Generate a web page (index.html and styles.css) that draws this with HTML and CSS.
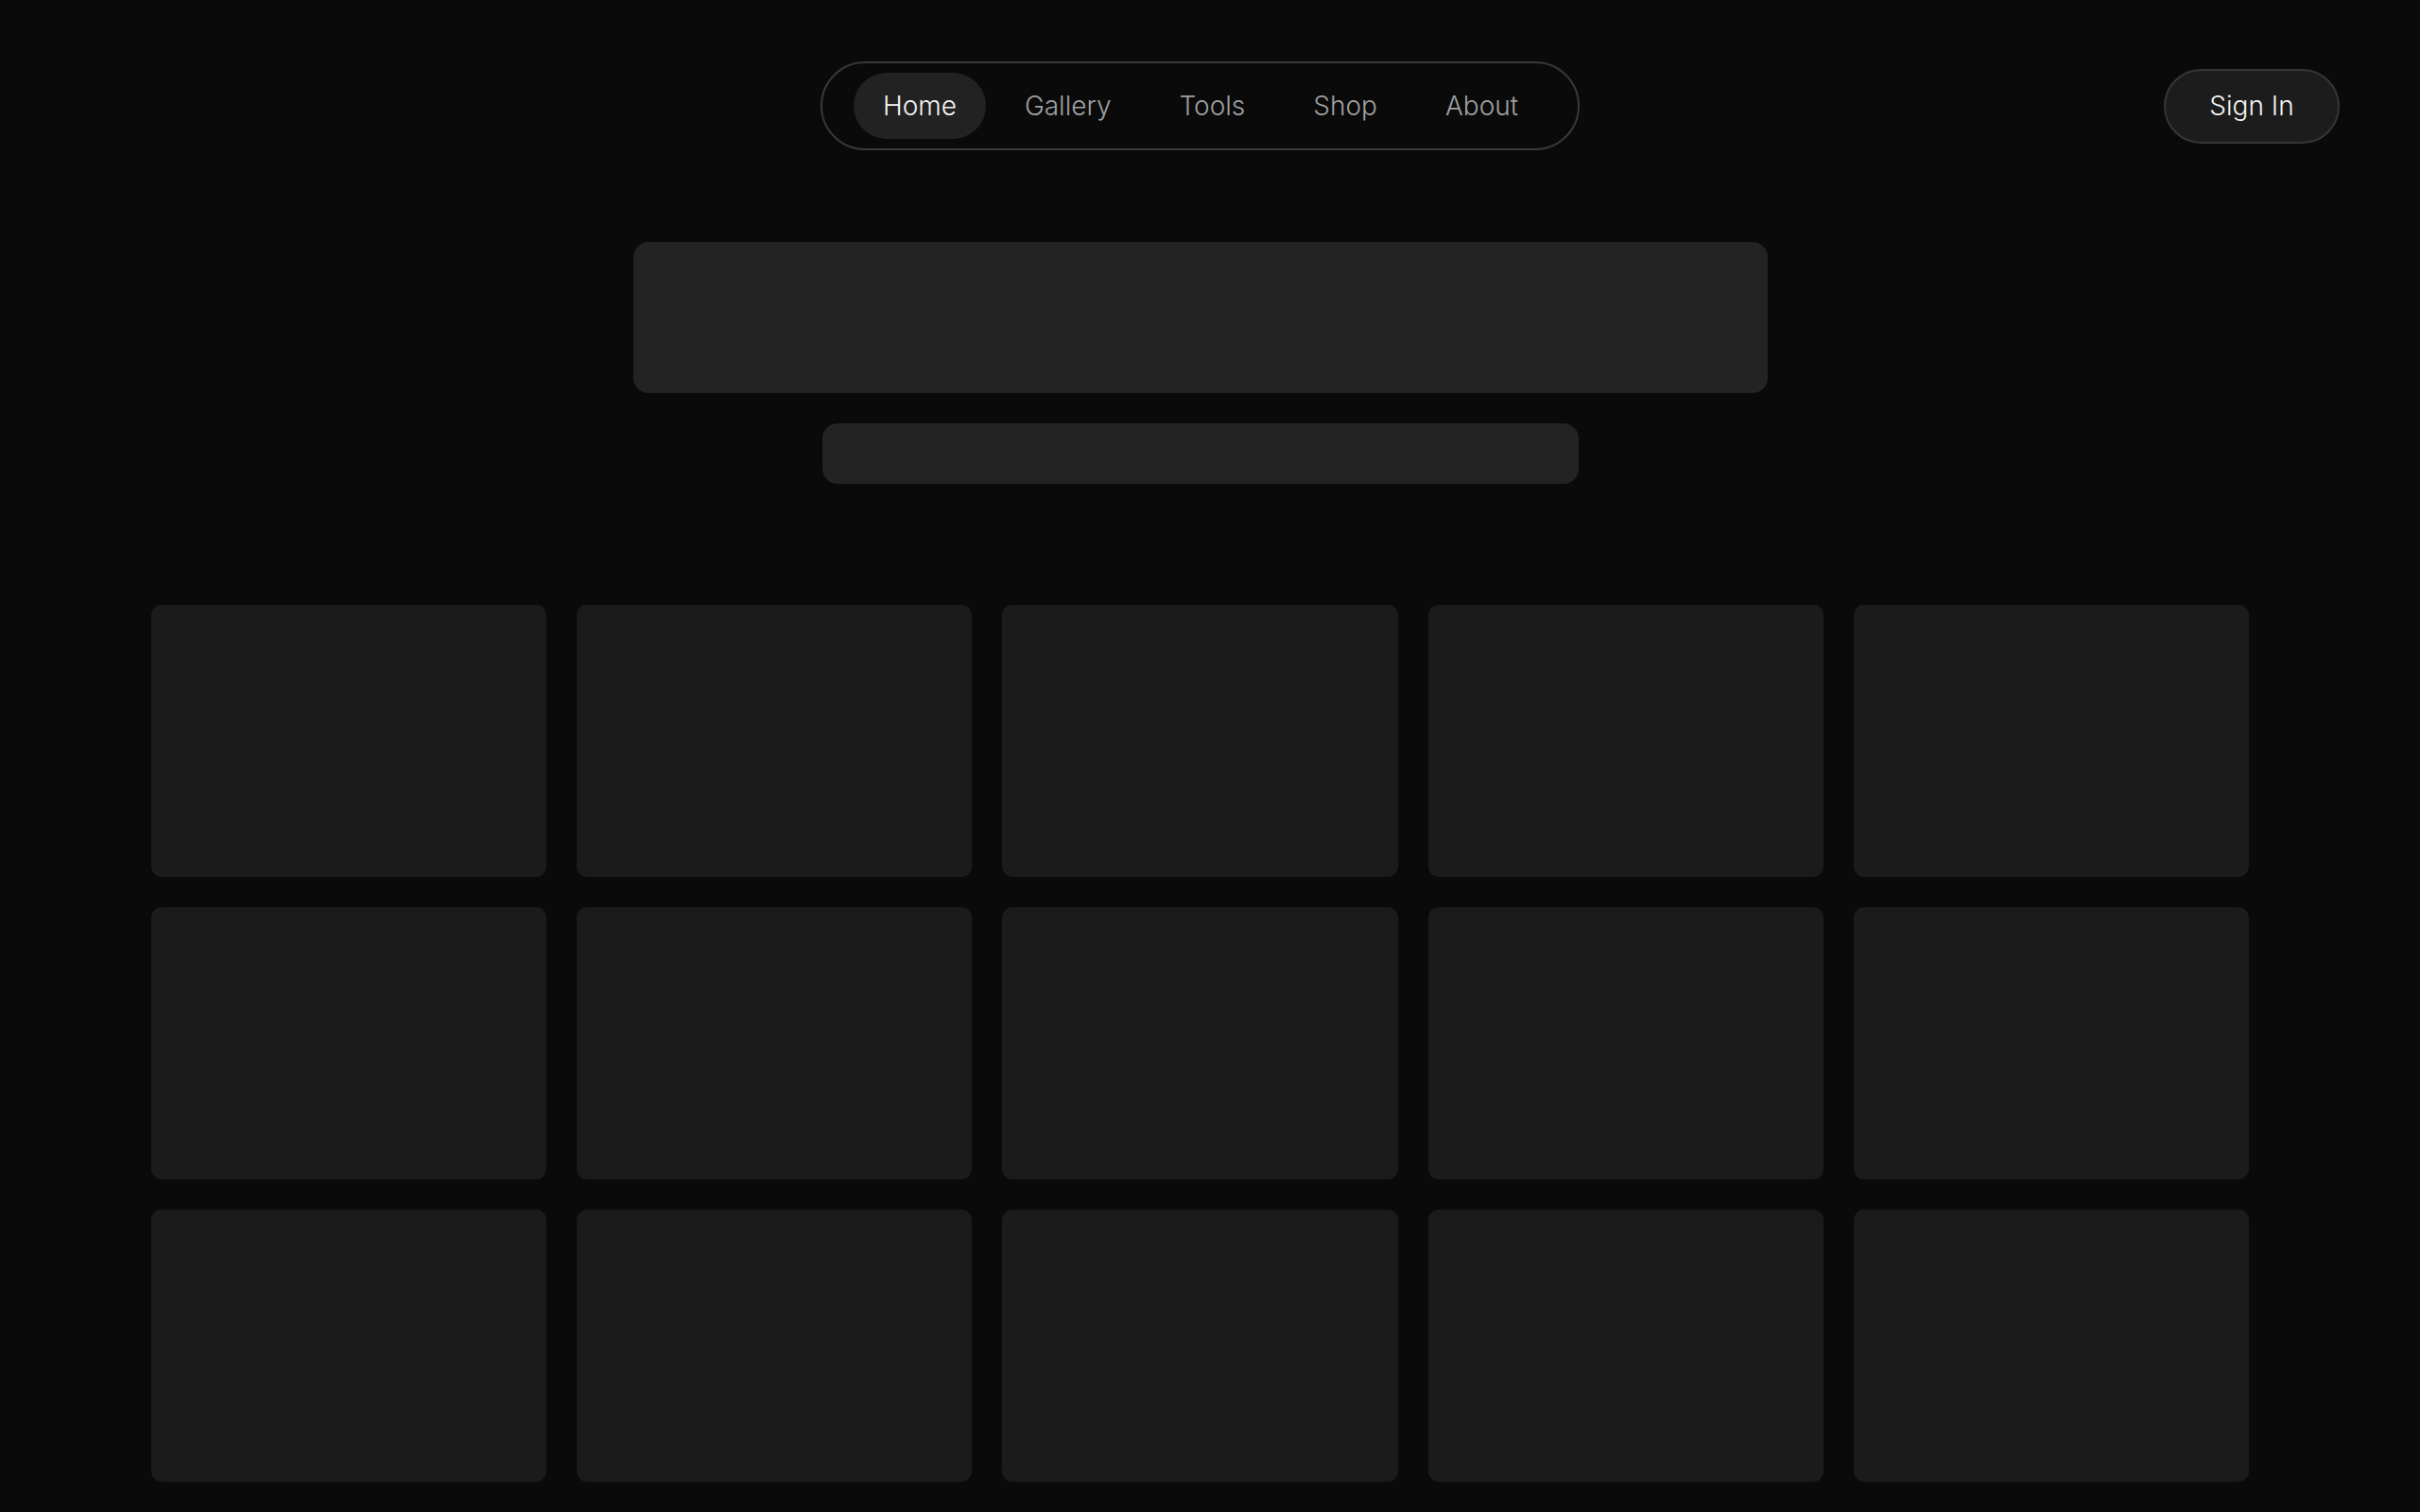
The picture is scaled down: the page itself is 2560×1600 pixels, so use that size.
FILE: index.html
```html
<!DOCTYPE html>
<html lang="en">

<head>
    <meta charset="UTF-8">
    <meta name="viewport" content="width=device-width, initial-scale=1.0">
    <title>Home</title>
    <link rel="stylesheet" href="styles.css">
</head>

<body>
    <header class="topbar">
        <nav class="nav">
            <a href="#" class="nav-link active">Home</a>
            <a href="#" class="nav-link">Gallery</a>
            <a href="#" class="nav-link">Tools</a>
            <a href="#" class="nav-link">Shop</a>
            <a href="#" class="nav-link">About</a>
        </nav>
        <button class="signin">Sign In</button>
    </header>

    <main>
        <section class="hero">
            <div class="skeleton title"></div>
            <div class="skeleton subtitle"></div>
        </section>

        <section class="grid">
            <div class="card"></div>
            <div class="card"></div>
            <div class="card"></div>
            <div class="card"></div>
            <div class="card"></div>
            <div class="card"></div>
            <div class="card"></div>
            <div class="card"></div>
            <div class="card"></div>
            <div class="card"></div>
            <div class="card"></div>
            <div class="card"></div>
            <div class="card"></div>
            <div class="card"></div>
            <div class="card"></div>
        </section>
    </main>
</body>

</html>
```

FILE: styles.css
```css
* {
    box-sizing: border-box;
    padding: 0;
    margin: 0;
}

html {
    background: #0a0a0a;
}

body {
    margin-right: 21px;
    background: #0a0a0a;
    font-family: Inter, 'Noto Sans', sans-serif;
    color: #ededed;
    padding-bottom: 120px;
}

.topbar {
    display: grid;
    grid-template-columns: 1fr auto 1fr;
    align-items: center;
    padding: 65px 64px 0;
}

.nav {
    grid-column: 2;
    display: flex;
    gap: 10px;
    padding: 10px 32px 10px 33px;
    border: 2px solid #393939;
    border-radius: 999px;
}

.nav-link {
    display: block;
    padding: 17px 31px;
    font-size: 28px;
    font-weight: 300;
    line-height: 36px;
    color: #a0a0a0;
    text-decoration: none;
    border-radius: 999px;
}

.nav-link.active {
    background: #222222;
    color: #f4f4f4;
}

.signin {
    grid-column: 3;
    justify-self: end;
    width: 186px;
    height: 79px;
    background: #1c1c1c;
    border: 2px solid #363636;
    border-radius: 999px;
    font-family: inherit;
    font-size: 28px;
    font-weight: 300;
    color: #f4f4f4;
}

.hero {
    display: flex;
    flex-direction: column;
    align-items: center;
    gap: 32px;
    margin-top: 97px;
}

.skeleton {
    background: #232323;
    border-radius: 16px;
}

.title {
    width: 1200px;
    height: 160px;
}

.subtitle {
    width: 800px;
    height: 64px;
}

.grid {
    display: grid;
    grid-template-columns: repeat(5, 1fr);
    gap: 32px;
    padding: 0 160px;
    margin-top: 128px;
}

.card {
    height: 288px;
    background: #1b1b1b;
    border-radius: 11px;
}
```
